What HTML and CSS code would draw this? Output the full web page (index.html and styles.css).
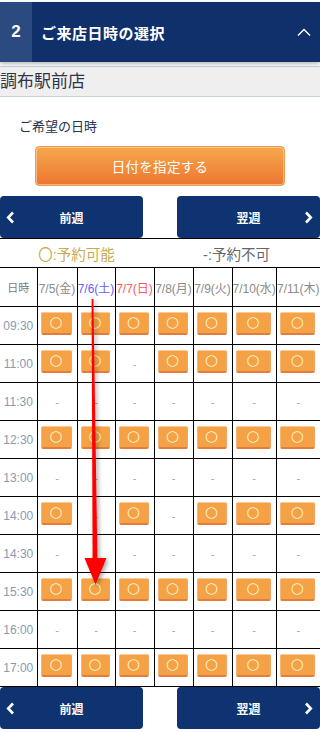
FILE: index.html
```html
<!DOCTYPE html>
<html lang="ja">
<head>
<meta charset="utf-8">
<title>ご来店日時の選択</title>
<link rel="stylesheet" href="styles.css">
</head>
<body>
<header class="step-head">
  <span class="step-num">2</span>
  <h2 class="step-title">ご来店日時の選択</h2>
  <svg class="step-toggle" width="14" height="8" viewBox="0 0 14 8"><polyline points="1,7.5 7,1.5 13,7.5" fill="none" stroke="#fff" stroke-width="1.4"/></svg>
</header>
<div class="shop">調布駅前店</div>
<p class="label">ご希望の日時</p>
<button class="date-btn" type="button">日付を指定する</button>
<nav class="week-nav">
  <a class="week-btn" href="#"><svg class="chev chev-l" width="9" height="13" viewBox="0 0 9 13"><polyline points="7,1.5 2.2,6.5 7,11.5" fill="none" stroke="#fff" stroke-width="2.6"/></svg>前週</a>
  <a class="week-btn" href="#">翌週<svg class="chev chev-r" width="9" height="13" viewBox="0 0 9 13"><polyline points="2,1.5 6.8,6.5 2,11.5" fill="none" stroke="#fff" stroke-width="2.6"/></svg></a>
</nav>
<section class="calendar">
  <div class="legend">
    <span class="legend-ok">〇:予約可能</span>
    <span class="legend-ng">-:予約不可</span>
  </div>
  <table class="slots">
    <colgroup>
      <col class="w37"><col class="w40"><col class="w38"><col class="w39"><col class="w39"><col class="w39"><col class="w44"><col class="w44">
    </colgroup>
    <thead>
      <tr class="head-row">
        <th class="h-time">日時</th>
        <th>7/5(金)</th>
        <th class="sat">7/6(土)</th>
        <th class="sun">7/7(日)</th>
        <th>7/8(月)</th>
        <th>7/9(火)</th>
        <th>7/10(水)</th>
        <th>7/11(木)</th>
      </tr>
    </thead>
    <tbody>
      <tr><th>09:30</th><td><a class="slot">○</a></td><td><a class="slot">○</a></td><td><a class="slot">○</a></td><td><a class="slot">○</a></td><td><a class="slot">○</a></td><td><a class="slot">○</a></td><td><a class="slot">○</a></td></tr>
      <tr><th>11:00</th><td><a class="slot">○</a></td><td><a class="slot">○</a></td><td class="ng">-</td><td><a class="slot">○</a></td><td><a class="slot">○</a></td><td><a class="slot">○</a></td><td><a class="slot">○</a></td></tr>
      <tr><th>11:30</th><td class="ng">-</td><td class="ng">-</td><td class="ng">-</td><td class="ng">-</td><td class="ng">-</td><td class="ng">-</td><td class="ng">-</td></tr>
      <tr><th>12:30</th><td><a class="slot">○</a></td><td><a class="slot">○</a></td><td><a class="slot">○</a></td><td><a class="slot">○</a></td><td><a class="slot">○</a></td><td><a class="slot">○</a></td><td><a class="slot">○</a></td></tr>
      <tr><th>13:00</th><td class="ng">-</td><td class="ng">-</td><td class="ng">-</td><td class="ng">-</td><td class="ng">-</td><td class="ng">-</td><td class="ng">-</td></tr>
      <tr><th>14:00</th><td><a class="slot">○</a></td><td class="ng">-</td><td><a class="slot">○</a></td><td class="ng">-</td><td><a class="slot">○</a></td><td><a class="slot">○</a></td><td><a class="slot">○</a></td></tr>
      <tr><th>14:30</th><td class="ng">-</td><td class="ng">-</td><td class="ng">-</td><td class="ng">-</td><td class="ng">-</td><td class="ng">-</td><td class="ng">-</td></tr>
      <tr><th>15:30</th><td><a class="slot">○</a></td><td><a class="slot">○</a></td><td><a class="slot">○</a></td><td><a class="slot">○</a></td><td><a class="slot">○</a></td><td><a class="slot">○</a></td><td><a class="slot">○</a></td></tr>
      <tr><th>16:00</th><td class="ng">-</td><td class="ng">-</td><td class="ng">-</td><td class="ng">-</td><td class="ng">-</td><td class="ng">-</td><td class="ng">-</td></tr>
      <tr><th>17:00</th><td><a class="slot">○</a></td><td><a class="slot">○</a></td><td><a class="slot">○</a></td><td><a class="slot">○</a></td><td><a class="slot">○</a></td><td><a class="slot">○</a></td><td><a class="slot">○</a></td></tr>
    </tbody>
  </table>
  <svg class="pointer" width="320" height="360" viewBox="0 0 320 360">
    <polygon points="91.6,60 93.4,60 97.4,321 92.6,321" fill="#ff0000"/>
    <polygon points="84.5,319 106.5,319 95.5,345.5" fill="#ff0000"/>
  </svg>
</section>
<nav class="week-nav">
  <a class="week-btn" href="#"><svg class="chev chev-l" width="9" height="13" viewBox="0 0 9 13"><polyline points="7,1.5 2.2,6.5 7,11.5" fill="none" stroke="#fff" stroke-width="2.6"/></svg>前週</a>
  <a class="week-btn" href="#">翌週<svg class="chev chev-r" width="9" height="13" viewBox="0 0 9 13"><polyline points="2,1.5 6.8,6.5 2,11.5" fill="none" stroke="#fff" stroke-width="2.6"/></svg></a>
</nav>
</body>
</html>
```
FILE: styles.css
```css
html, body {
  margin: 0;
  padding: 0;
  background: #fff;
}
body {
  width: 320px;
  font-family: "Liberation Sans", "Noto Sans CJK JP", sans-serif;
  color: #333;
}

.step-head {
  margin-top: 2px;
  height: 60px;
  display: flex;
  align-items: center;
  background: #10306b;
  box-shadow: 0 2px 4px rgba(0, 0, 0, 0.28);
  position: relative;
}
.step-num {
  width: 32px;
  align-self: stretch;
  display: flex;
  align-items: center;
  justify-content: center;
  background: #2a4a80;
  color: #fff;
  font-size: 17px;
  font-weight: bold;
}
.step-title {
  margin: 0 0 0 9px;
  flex: 1;
  color: #fff;
  font-size: 15px;
  font-weight: bold;
  letter-spacing: 0.5px;
}
.step-toggle {
  margin-right: 9px;
  display: block;
}

.shop {
  margin-top: 4px;
  height: 29px;
  line-height: 29px;
  border-top: 1px solid #c6cfdc;
  border-bottom: 1px solid #c6cfdc;
  background: #efefef;
  color: #2f3448;
  font-size: 17px;
}

.label {
  margin: 21px 0 0 19px;
  font-size: 13px;
  line-height: 18px;
  color: #273150;
}

.date-btn {
  display: block;
  margin: 10px 0 0 35px;
  width: 250px;
  height: 40px;
  border: 1px solid #ef9a4c;
  border-radius: 4px;
  background: linear-gradient(#f6a84c, #ec7631);
  box-shadow: inset 0 0 0 1px rgba(255, 226, 190, 0.55);
  color: #fff;
  font-family: inherit;
  font-size: 13.5px;
  letter-spacing: 0.3px;
  padding: 0;
}

.week-nav {
  margin-top: 10px;
  display: flex;
  justify-content: space-between;
}
.calendar + .week-nav {
  margin-top: 0;
}
.week-btn {
  position: relative;
  width: 143px;
  height: 42px;
  display: flex;
  align-items: center;
  justify-content: center;
  background: #0f3270;
  border-radius: 4px;
  color: #fff;
  font-size: 12px;
  font-weight: bold;
  text-decoration: none;
}
.chev {
  position: absolute;
  top: 15px;
}
.chev-l { left: 6px; }
.chev-r { right: 7px; }

.calendar {
  position: relative;
  border-top: 1px solid #000;
}
.legend {
  height: 28px;
  display: grid;
  grid-template-columns: 1fr 1fr;
  align-items: center;
  font-size: 14.5px;
  text-align: center;
}
.legend span {
  padding-right: 7px;
}
.legend-ok { color: #c9aa52; }
.legend-ng { color: #666; }

.slots {
  width: 320px;
  border-collapse: collapse;
  table-layout: fixed;
}
.w37 { width: 37px; }
.w38 { width: 38px; }
.w39 { width: 39px; }
.w40 { width: 40px; }
.w44 { width: 44px; }
.slots th,
.slots td {
  border: 1px solid #000;
  padding: 0;
  text-align: center;
  font-weight: normal;
  vertical-align: top;
}
.slots tr > :first-child { border-left: none; }
.slots tr > :last-child { border-right: none; }
.head-row { height: 39px; }
.head-row th {
  vertical-align: middle;
  font-size: 12px;
  color: #8a8a8a;
  white-space: nowrap;
}
.head-row .h-time { font-size: 11px; color: #7a7a7a; }
.head-row .sat { color: #6a5cff; }
.head-row .sun { color: #ff5566; }
.slots tbody tr { height: 38px; }
.slots tbody th {
  vertical-align: middle;
  font-size: 12px;
  color: #8b9ab0;
}
.slots td.ng {
  vertical-align: middle;
  font-size: 11px;
  color: #9aa7bd;
}
.slot {
  display: block;
  box-sizing: border-box;
  width: calc(100% - 8px);
  height: 23px;
  margin: 5px 0 0 3px;
  background: #f4a245;
  border-top: 1px solid #f9c996;
  border-left: 1px solid #f4b57a;
  border-right: 1px solid #f0a466;
  border-bottom: 2px solid #e47d3b;
  border-radius: 2px;
  color: #fff8d2;
  font-family: "DejaVu Sans", sans-serif;
  font-size: 15px;
  line-height: 19px;
}

.pointer {
  position: absolute;
  left: 0;
  top: 0;
  filter: drop-shadow(2px 2px 2px rgba(0, 0, 0, 0.35));
  pointer-events: none;
}
```
